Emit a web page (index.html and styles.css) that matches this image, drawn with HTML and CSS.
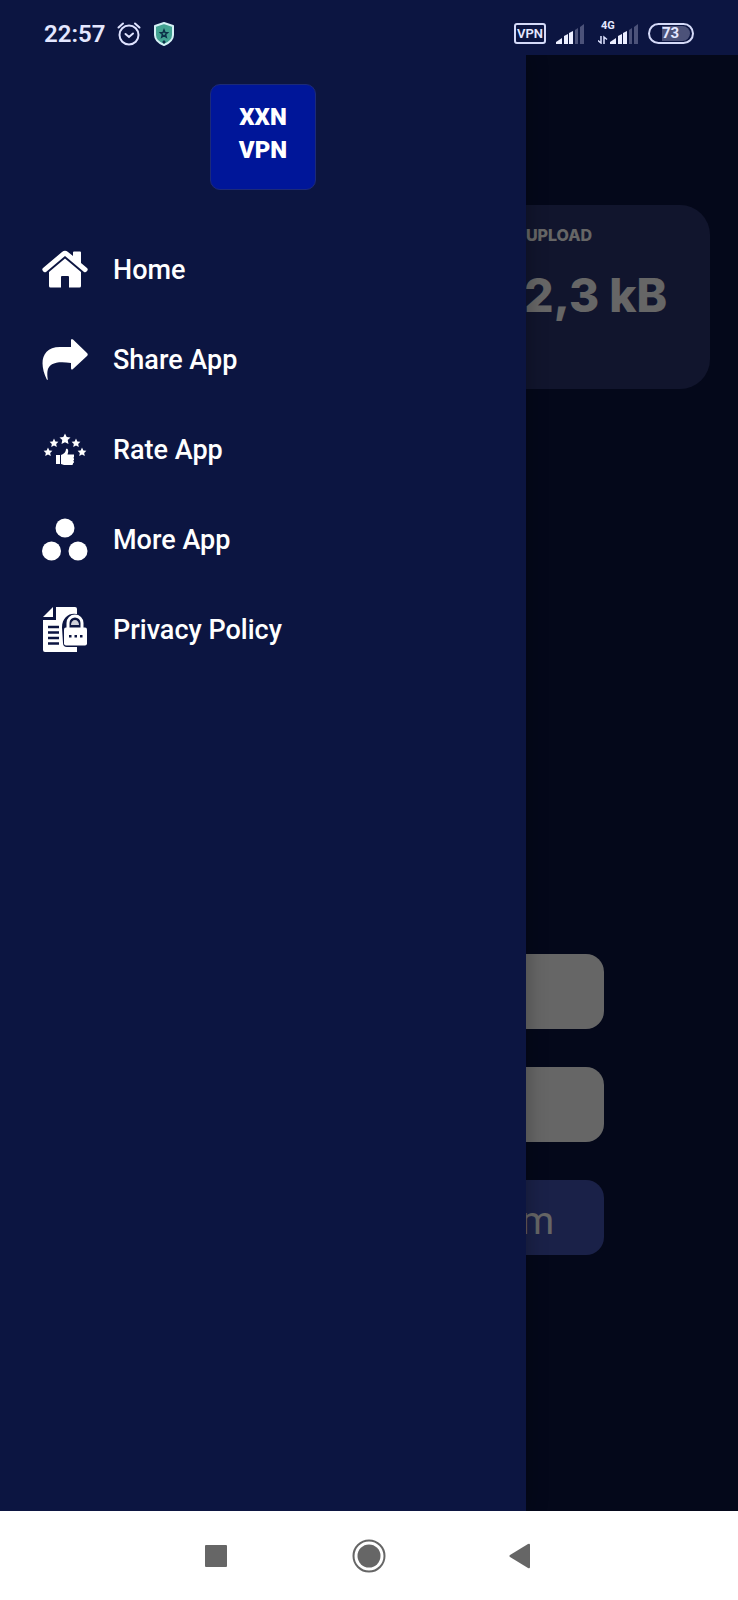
FILE: index.html
```html
<!DOCTYPE html>
<html lang="en">
<head>
    <meta charset="UTF-8">
    <meta name="viewport" content="width=device-width, initial-scale=1.0">
    <title>XXN VPN</title>
    <link rel="stylesheet" href="styles.css">
</head>
<body>

    <header class="status-bar">
        <div class="status-left">
            <span class="clock">22:57</span>
            <svg class="alarm" width="24" height="24" viewBox="0 0 24 24" fill="none" stroke="#dfe3ff" stroke-width="2" stroke-linecap="round">
                <circle cx="12" cy="13" r="9.5"/>
                <path d="M8.5 12l3.5 3 4-3.500M1.500 5.500L6 1.500M22.500 5.500L18 1.500"/>
            </svg>
            <svg width="22" height="24" viewBox="0 0 22 24">
                <path d="M11 1l9 3v9c0 5-4 8-9 10-5-2-9-5-9-10V4z" fill="#43a392" stroke="#d5f1f5" stroke-width="2" stroke-linejoin="round"/>
                <path d="M11 8l1 2.500 2.500.2-2 1.800.7 2.500-2.200-1.400L8.800 15l.7-2.500-2-1.800 2.500-.2z" fill="none" stroke="#0c3048" stroke-width="1.500"/>
                <path d="M11 18l1.800 2-1.800 2-1.800-2z" fill="#0c3048"/>
            </svg>
        </div>
        <div class="status-right">
            <span class="vpn-badge">VPN</span>
            <svg class="signal" width="28" height="20" viewBox="0 0 28 20">
                <path d="M0 20v-2l6-4v6zM8 20v-8l4-2v10zM13 20V9l4-2v13z" fill="#eceeff"/>
                <path d="M19 20V6l3-2v16zM24 20V3l4-3v20z" fill="#4c5279"/>
            </svg>
            <div class="mobile">
                <span class="network">4G</span>
                <svg width="40" height="20" viewBox="0 0 40 20">
                    <path d="M3 12v7l-3-2.500M6 20v-7l3 2.500" fill="none" stroke="#dfe3ff" stroke-width="1.500"/>
                    <path d="M12 20v-2l6-4v6zM20 20v-8l4-2v10zM25 20V9l4-2v13z" fill="#eceeff"/>
                    <path d="M31 20V6l3-2v16zM36 20V3l4-3v20z" fill="#4c5279"/>
                </svg>
            </div>
            <span class="battery"><span class="battery-level">73</span></span>
        </div>
    </header>

    <div class="screen">
        <main class="page">
            <section class="traffic-card">
                <div class="stat">
                    <span class="stat-label">UPLOAD</span>
                    <span class="stat-value">32,3 kB</span>
                </div>
            </section>
            <div class="actions">
                <button type="button" class="action" aria-label="Server"></button>
                <button type="button" class="action" aria-label="Connect"></button>
                <button type="button" class="action telegram">Telegram</button>
            </div>
        </main>

        <div class="scrim"></div>

        <aside class="drawer">
            <div class="logo">
                <span>XXN</span>
                <span>VPN</span>
            </div>
            <nav class="menu">
                <a href="#" class="menu-item">
                    <svg width="46" height="46" viewBox="0 0 46 46" fill="#fff">
                        <path d="M31 9V5.500q0-1 1-1h6q1 0 1 1V16l6 5q1.500 1.500 0 3-1.500 2-3 1L23 9 4 25q-2 1-3-1-1.500-1.500 0-3L20 5q3-2.500 6 0z"/>
                        <path d="M23 11.500l16 13.500v14q0 1.500-1.500 1.500H27V30q0-1-1-1h-6q-1 0-1 1v10.500H8.500Q7 40.500 7 39V25z"/>
                    </svg>
                    <span>Home</span>
                </a>
                <a href="#" class="menu-item">
                    <svg width="46" height="46" viewBox="0 0 46 46" fill="#fff">
                        <path d="M29 3.500q0-2.500 2-1L45 16q1.500 1.500 0 3L31 32q-2 1.500-2-1v-5C15 24 7 26 5.500 34q-.5 4 .3 8.500-.5.800-1 0C-3 27-1 10 18 10h11z"/>
                    </svg>
                    <span>Share App</span>
                </a>
                <a href="#" class="menu-item">
                    <svg width="46" height="46" viewBox="0 0 46 46" fill="#fff">
                        <defs>
                            <path id="star" d="M0-5.500l1.700 3.600 3.800.4-2.800 2.600.8 4L0 3.200l-3.500 1.900.8-4L-5.500-1.500l3.800-.4z"/>
                        </defs>
                        <use href="#star" transform="translate(23 12)"/>
                        <use href="#star" transform="translate(12 16) scale(.8)"/>
                        <use href="#star" transform="translate(34 16) scale(.8)"/>
                        <use href="#star" transform="translate(6 25) scale(.8)"/>
                        <use href="#star" transform="translate(40 25) scale(.8)"/>
                        <path d="M14 28h4v9h-4zM19 28c3-1 5-3 5-6 2-1 3 2 1.500 5.500H32v3h-.7v.8h.7v2h-.7v.8h.5v2h-.6l-.7 1.900H22l-3-1z"/>
                    </svg>
                    <span>Rate App</span>
                </a>
                <a href="#" class="menu-item">
                    <svg width="46" height="46" viewBox="0 0 46 46" fill="#fff">
                        <circle cx="23" cy="11" r="9.500"/>
                        <circle cx="9.500" cy="34" r="9.500"/>
                        <circle cx="36" cy="34" r="9.500"/>
                    </svg>
                    <span>More App</span>
                </a>
                <a href="#" class="menu-item">
                    <svg width="46" height="46" viewBox="0 0 46 46" fill="#fff">
                        <path d="M11 0v10H1z"/>
                        <path d="M14 0h19q2 0 2 2v43H3q-2 0-2-2V13h13z"/>
                        <path d="M6 20h11M6 25.500h11M6 31h11M6 36.500h11" stroke="#0c1541" stroke-width="2.500"/>
                        <path d="M20 20.500C20 2 44 2 44 20.500h2V40H25q-4 0-4-4z" fill="#0c1541"/>
                        <path d="M26 22v-6a7 7 0 0 1 14 0v6" fill="none" stroke="#fff" stroke-width="3"/>
                        <path d="M29 18a4 5 0 0 1 8 0z" opacity=".8"/>
                        <rect x="22" y="20.500" width="23" height="18" rx="2"/>
                        <path d="M27 28h2.500v2.500H27zM32.500 28H35v2.500h-2.500zM38 28h2.500v2.500H38z" fill="#0c1541"/>
                    </svg>
                    <span>Privacy Policy</span>
                </a>
            </nav>
        </aside>
    </div>

    <footer class="nav-bar">
        <button type="button" class="nav-button" aria-label="Recent apps">
            <svg width="34" height="34" viewBox="0 0 34 34" fill="#666"><rect x="6" y="6" width="22" height="22" rx="1"/></svg>
        </button>
        <button type="button" class="nav-button" aria-label="Home screen">
            <svg width="34" height="34" viewBox="0 0 34 34" fill="#666"><circle cx="17" cy="17" r="11.500"/><circle cx="17" cy="17" r="15.500" fill="none" stroke="#666" stroke-width="2"/></svg>
        </button>
        <button type="button" class="nav-button" aria-label="Back">
            <svg width="34" height="34" viewBox="0 0 34 34" fill="#666"><path d="M25 6v22q0 2-2 1L5 18q-1.500-1 0-2L23 5q2-1 2 1z"/></svg>
        </button>
    </footer>

</body>
</html>
```
FILE: styles.css
```css
body {
    font-family: Roboto, sans-serif;
    margin: 0;
    min-height: 100vh;
    display: flex;
    flex-direction: column;
    background-color: #0c1541;
    color: #fff;
}
svg {
    display: block;
    flex-shrink: 0;
}
button {
    border: none;
    padding: 0;
    font-family: inherit;
    cursor: pointer;
}

/* Status bar */
.status-bar {
    display: flex;
    justify-content: space-between;
    align-items: center;
    height: 55px;
    padding: 12px 44px 0;
    box-sizing: border-box;
    color: #e4e7ff;
}
.status-left,
.status-right {
    display: flex;
    align-items: center;
}
.status-left {
    gap: 12px;
}
.status-right {
    gap: 10px;
}
.clock {
    font-size: 24px;
    font-weight: 600;
}
.vpn-badge {
    font-size: 13px;
    font-weight: 600;
    line-height: 17px;
    padding: 0 1px;
    border: 2px solid #d5daf8;
    border-radius: 3px;
}
.mobile {
    position: relative;
    margin-left: 4px;
}
.network {
    position: absolute;
    top: -4px;
    left: 3px;
    font-size: 11px;
    font-weight: 700;
    line-height: 12px;
}
.battery {
    width: 42px;
    padding: 1px 0;
    border: 2px solid #d5daf8;
    border-radius: 12px;
    text-align: center;
}
.battery-level {
    display: block;
    margin: 0 2px 0 12px;
    padding-right: 12px;
    border-radius: 0 8px 8px 0;
    background-color: #4c5279;
    font-size: 15px;
    font-weight: 700;
    line-height: 15px;
}

/* Main screen */
.screen {
    position: relative;
    flex: 1;
    display: flex;
    flex-direction: column;
}
.page {
    flex: 1;
    display: flex;
    flex-direction: column;
    justify-content: space-between;
    padding: 150px 28px 256px;
}
.traffic-card {
    display: flex;
    justify-content: flex-end;
    height: 184px;
    padding: 20px 43px;
    box-sizing: border-box;
    border-radius: 30px;
    background-color: #2b3571;
}
.stat {
    display: flex;
    flex-direction: column;
    width: 216px;
    font-family: Inter, sans-serif;
}
.stat-label {
    font-size: 16px;
    font-weight: 800;
    line-height: 20px;
    text-align: center;
}
.stat-value {
    margin-top: 20px;
    font-size: 46px;
    font-weight: 800;
    line-height: 60px;
    text-align: right;
}
.actions {
    display: flex;
    flex-direction: column;
    gap: 38px;
    padding: 0 106px;
}
.action {
    height: 75px;
    border-radius: 18px;
    background-color: #fff;
}
.telegram {
    padding: 6px 50px 0 0;
    background-color: #4353b4;
    color: #fff;
    font-size: 38px;
    text-align: right;
}
.scrim {
    position: absolute;
    inset: 0;
    background-color: rgba(0, 0, 0, 0.6);
}

/* Drawer */
.drawer {
    position: absolute;
    top: 0;
    bottom: 0;
    left: 0;
    width: 526px;
    max-width: 80%;
    padding-top: 29px;
    box-sizing: border-box;
    background-color: #0c1541;
    box-shadow: 0 0 20px rgba(0, 0, 0, 0.3);
    clip-path: inset(0 -30px 0 0);
}
.logo {
    display: flex;
    flex-direction: column;
    align-items: center;
    width: 106px;
    height: 106px;
    margin: 0 auto;
    padding-top: 16px;
    box-sizing: border-box;
    border: 1px solid #1c2a78;
    border-radius: 10px;
    background-color: #001699;
    font-family: Impact, "Liberation Sans Narrow", Roboto, sans-serif;
    font-size: 24px;
    font-weight: 900;
    line-height: 33px;
}
.menu {
    display: flex;
    flex-direction: column;
    margin-top: 35px;
}
.menu-item {
    display: flex;
    align-items: center;
    gap: 25px;
    height: 90px;
    padding-left: 42px;
    color: #fff;
    font-size: 27px;
    font-weight: 500;
    text-decoration: none;
}

/* System navigation */
.nav-bar {
    display: flex;
    justify-content: center;
    align-items: center;
    gap: 119px;
    height: 89px;
    background-color: #fff;
}
.nav-button {
    background: none;
}
```
